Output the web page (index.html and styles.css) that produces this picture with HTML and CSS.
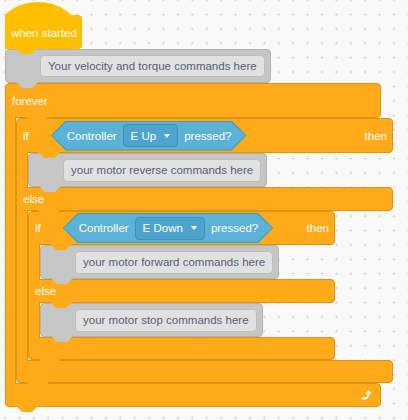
FILE: index.html
```html
<!DOCTYPE html>
<html lang="en">
<head>
  <meta charset="UTF-8" />
  <title>Blocks</title>
  <link rel="stylesheet" href="styles.css">
</head>
<body>
  <div class="script">
    <div class="hat"><span>when started</span></div>

    <div class="cmd first">
      <div class="field">Your velocity and torque commands here</div>
    </div>

    <div class="cblock forever">
      <div class="c-head">forever</div>
      <div class="c-body">
        <div class="c-arm"></div>
        <div class="c-inner">

          <div class="cblock if-outer">
            <div class="c-head">
              <span>if</span>
              <div class="bool-edge">
                <div class="bool">
                  <span>Controller</span>
                  <div class="dd">E Up <i class="caret"></i></div>
                  <span>pressed?</span>
                </div>
              </div>
              <span class="then">then</span>
            </div>
            <div class="c-body">
              <div class="c-arm"></div>
              <div class="c-inner">
                <div class="cmd">
                  <div class="field">your motor reverse commands here</div>
                </div>
              </div>
            </div>
            <div class="c-mid">else</div>
            <div class="c-body">
              <div class="c-arm"></div>
              <div class="c-inner">

                <div class="cblock if-inner">
                  <div class="c-head">
                    <span>if</span>
                    <div class="bool-edge">
                      <div class="bool">
                        <span>Controller</span>
                        <div class="dd">E Down <i class="caret"></i></div>
                        <span>pressed?</span>
                      </div>
                    </div>
                    <span class="then">then</span>
                  </div>
                  <div class="c-body">
                    <div class="c-arm"></div>
                    <div class="c-inner">
                      <div class="cmd">
                        <div class="field">your motor forward commands here</div>
                      </div>
                    </div>
                  </div>
                  <div class="c-mid">else</div>
                  <div class="c-body">
                    <div class="c-arm"></div>
                    <div class="c-inner">
                      <div class="cmd">
                        <div class="field">your motor stop commands here</div>
                      </div>
                    </div>
                  </div>
                  <div class="c-foot"></div>
                </div>

              </div>
            </div>
            <div class="c-foot"></div>
          </div>

        </div>
      </div>
      <div class="c-foot">
        <svg class="loop" width="12" height="12" viewBox="0 0 12 12">
          <path d="M1.5 9.5 Q7.5 10.5 7.5 4.5" fill="none" stroke="#fff" stroke-width="1.8" stroke-linecap="round"/>
          <polygon points="4.5,5 10.5,5 7.5,1" fill="#fff"/>
        </svg>
      </div>
    </div>
  </div>
</body>
</html>
```

FILE: styles.css
```css
body {
  margin: 0;
  height: 420px;
  background-color: #f9f9f9;
  background-image: radial-gradient(circle, #d4d4d4 0.9px, transparent 1.3px);
  background-size: 14.42px 14.42px;
  background-position: -2.2px -7.2px;
  font-family: "Liberation Sans", Arial, sans-serif;
  font-size: 11.5px;
  color: #fff;
}

.script {
  padding-left: 5px;
}

/* hat block */
.hat {
  position: relative;
  box-sizing: border-box;
  width: 77px;
  height: 34px;
  margin-top: 15px;
  padding-left: 6px;
  display: flex;
  align-items: center;
  background: #ffbf00;
  border-radius: 0 4px 4px 0;
}

.hat span {
  position: relative;
  margin-top: 2px;
}

.hat::before {
  content: "";
  position: absolute;
  left: -7px;
  top: -13px;
  width: 80px;
  height: 60px;
  border-radius: 50%;
  background: #ffbf00;
  clip-path: inset(0 0 47px 0);
}

/* the tab under every block piece */
.hat::after,
.cmd::after,
.c-head::after,
.c-mid::after,
.c-foot::after {
  content: "";
  position: absolute;
  left: 10px;
  bottom: -6px;
  width: 22px;
  height: 6px;
  background: inherit;
  clip-path: polygon(0 0, 100% 0, 16px 100%, 6px 100%);
  z-index: 2;
}

.hat::after {
  bottom: -5px;
}

/* grey command stubs */
.cmd {
  position: relative;
  box-sizing: border-box;
  width: max-content;
  height: 34px;
  padding: 0 5px 0 34px;
  display: flex;
  align-items: center;
  background: #c6c6c6;
  border: 1px solid #b2b2b2;
  border-radius: 4px;
}

.field {
  box-sizing: border-box;
  height: 23px;
  padding: 0 7px;
  display: flex;
  align-items: center;
  color: #575e75;
  background: #e1e1e1;
  border: 1px solid #bdbdbd;
  border-radius: 4px;
}

.cmd.first .field {
  height: 22px;
}

/* c-shaped blocks */
.c-head,
.c-mid,
.c-foot {
  position: relative;
  box-sizing: border-box;
  display: flex;
  align-items: center;
  padding: 0 5px 0 6px;
  background: #ffab19;
  border: 1px solid #d99514;
}

.c-head {
  height: 35px;
  border-radius: 4px 4px 4px 0;
}

.c-mid {
  height: 24px;
  border-radius: 0 4px 4px 0;
}

.c-foot {
  height: 23px;
  border-radius: 0 4px 4px 4px;
}

.c-head::after,
.c-mid::after {
  left: 21px;
}

.c-body {
  display: flex;
}

.c-arm {
  position: relative;
  z-index: 1;
  flex: none;
  box-sizing: border-box;
  width: 12px;
  margin: -1px 0;
  background: #ffab19;
  border-left: 1px solid #d99514;
  border-right: 1px solid #d99514;
}

.forever {
  width: 376px;
}

.forever > .c-body > .c-arm {
  width: 11px;
}

.forever > .c-head::after {
  left: 20px;
}

.forever > .c-foot {
  height: 24px;
  justify-content: flex-end;
  padding-right: 7px;
}

.if-outer {
  width: 377px;
}

.if-inner {
  width: 307px;
}

.if-inner > .c-head {
  height: 34px;
}

.then {
  margin-left: auto;
}

/* boolean reporter */
.bool-edge {
  margin-left: 22px;
  padding: 1px;
  background: #3a9cc8;
  clip-path: polygon(15px 0, calc(100% - 15px) 0, 100% 50%, calc(100% - 15px) 100%, 15px 100%, 0 50%);
}

.bool {
  height: 28px;
  padding: 0 14px 0 15px;
  display: flex;
  align-items: center;
  gap: 6px;
  background: #5cb1d6;
  clip-path: polygon(15px 0, calc(100% - 15px) 0, 100% 50%, calc(100% - 15px) 100%, 15px 100%, 0 50%);
}

.dd {
  box-sizing: border-box;
  height: 23px;
  padding: 0 7px;
  display: flex;
  align-items: center;
  gap: 8px;
  background: #4da5cd;
  border: 1px solid #3d90b8;
  border-radius: 4px;
}

.caret {
  width: 0;
  height: 0;
  border-left: 3px solid transparent;
  border-right: 3px solid transparent;
  border-top: 4px solid #fff;
}

.loop {
  display: block;
}
```
